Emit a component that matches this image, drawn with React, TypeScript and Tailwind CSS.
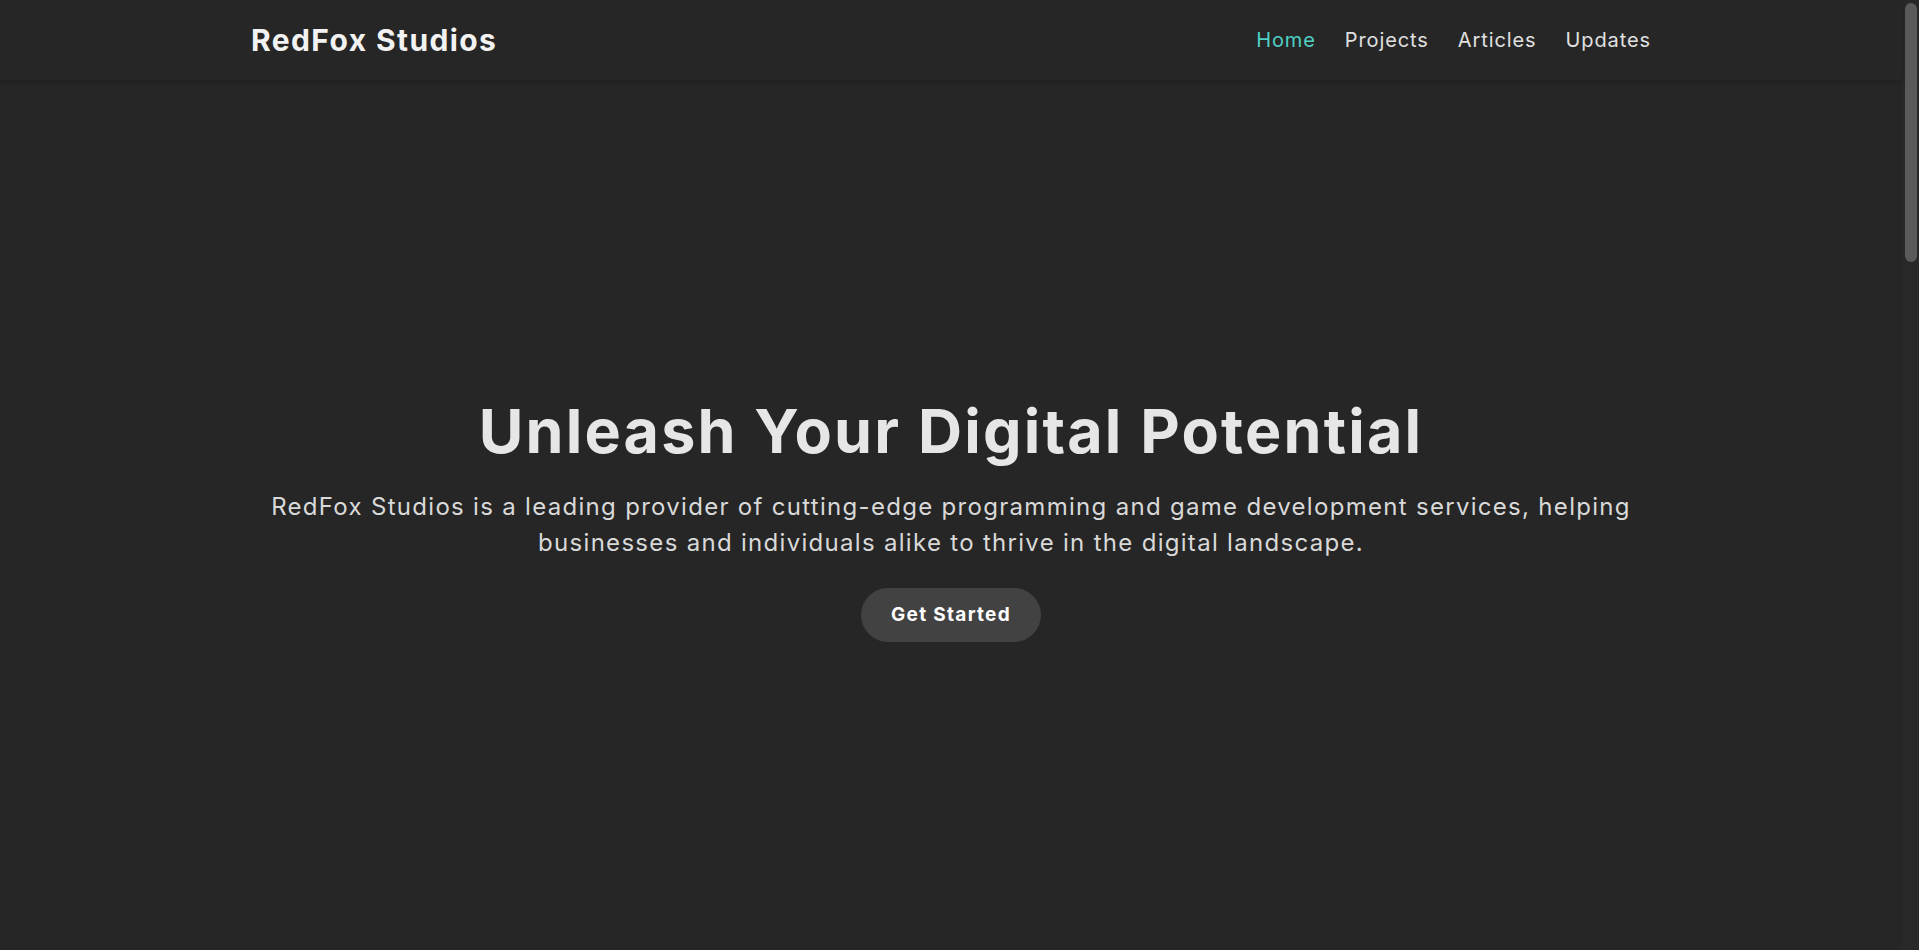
import { useState } from "react";

const links = ["Home", "Projects", "Articles", "Updates"];

const App = () => {
  const [active, setActive] = useState("Home");

  return (
    <div
      className="flex h-screen w-full overflow-hidden bg-[#262626] text-[#e6e6e6]"
      style={{ fontFamily: "Inter, 'Open Sans', sans-serif" }}
    >
      <div className="flex min-w-0 flex-1 flex-col">
        <header className="relative z-10 h-[80px] shrink-0 bg-[#262626] shadow-[0_1px_4px_rgba(0,0,0,0.25)]">
          <div className="mx-auto flex h-full max-w-[1400px] items-center justify-between">
            <a href="#" className="text-[30px] font-bold tracking-[1.4px] text-[#f2f2f2]">
              RedFox Studios
            </a>
            <nav className="flex items-center gap-[29px] text-[20px] tracking-[0.9px]">
              {links.map((link) => (
                <a
                  key={link}
                  href="#"
                  onClick={() => setActive(link)}
                  className={active === link ? "text-[#4fd1c5]" : "text-[#e0e0e0] hover:text-white"}
                >
                  {link}
                </a>
              ))}
            </nav>
          </div>
        </header>

        <main className="flex flex-1 flex-col items-center pt-[315px] text-center">
          <h1 className="text-[61px] font-bold leading-[72px] tracking-[2.2px] text-[#e6e6e6]">
            Unleash Your Digital Potential
          </h1>
          <p className="mt-[22px] text-[24px] leading-[36px] tracking-[1.3px] text-[#d9d9d9]">
            RedFox Studios is a leading provider of cutting-edge programming and game development services, helping
            <br />
            businesses and individuals alike to thrive in the digital landscape.
          </p>
          <button className="mt-[27px] h-[54px] w-[180px] rounded-full bg-[#424242] text-[19px] font-bold tracking-[1.3px] text-white hover:bg-[#4d4d4d]">
            Get Started
          </button>
        </main>
      </div>

      <div className="w-[17px] shrink-0 bg-[#282828] pl-[3px] pt-[3px]">
        <div className="h-[259px] w-[12px] rounded-full bg-[#5a5a5a]" />
      </div>
    </div>
  );
};

export default App;
